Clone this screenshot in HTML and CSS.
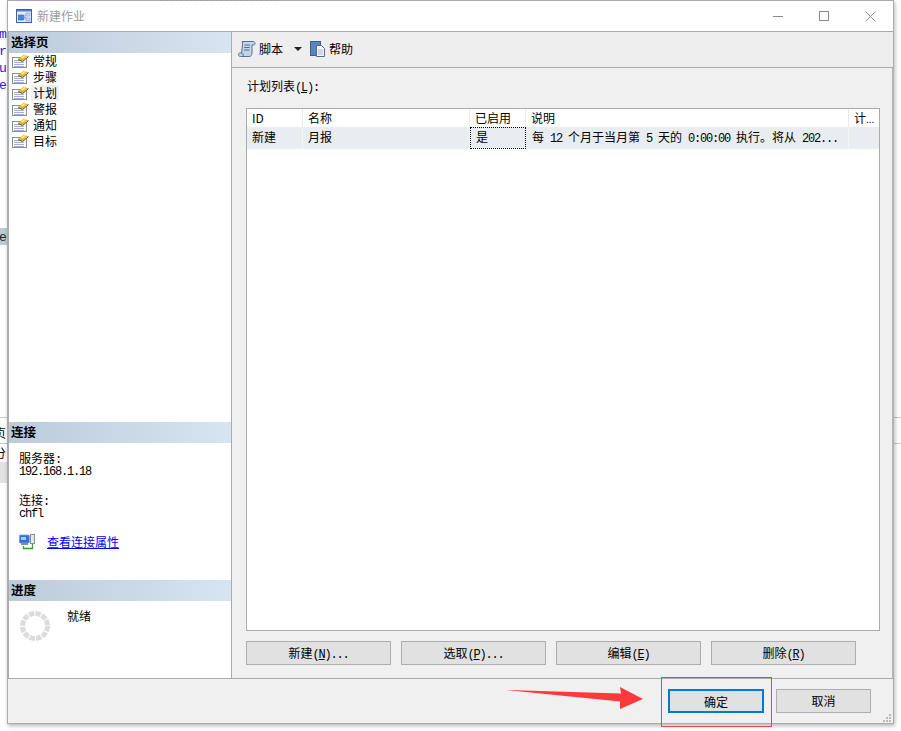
FILE: index.html
```html
<!DOCTYPE html>
<html lang="zh">
<head>
<meta charset="utf-8">
<title>新建作业</title>
<link rel="stylesheet" href="styles.css">
</head>
<body>
<svg class="defs" width="0" height="0" aria-hidden="true">
  <symbol id="page" viewBox="0 0 17 16">
    <rect x=".5" y="4.500" width="14" height="10" fill="#fcfcfc" stroke="#8c8c8c"/>
    <path d="M2 7.500h8M2 9.500h10M2 11.500h10M2 13.500h10" stroke="#9fb4d0"/>
    <path d="M6 6L12 1.500L16.500 3.500L10.500 8.500z" fill="#e8b52e"/>
    <path d="M9 4.500L12.500 2L14 2.700L10.500 5.500zM11.500 6.500L15 3.700L16 4.200L12.500 7z" fill="#fdeea0"/>
    <path d="M6 6.500L10.500 8.500L16.500 3.500" fill="none" stroke="#5e5436"/>
  </symbol>
</svg>

<div class="stage">
  <div class="backdrop">
    <span class="code c1">m</span>
    <span class="code c2">r</span>
    <span class="code c3">u</span>
    <span class="code c4">e</span>
    <div class="band"></div>
    <span class="code c5">e</span>
    <div class="rule r1"></div>
    <div class="rule r2"></div>
    <span class="frag f1">贞</span>
    <span class="frag f2">分</span>
    <div class="lower"></div>
    <div class="lower2"></div>
    <div class="rule r3"></div>
    <div class="rule r4"></div>
  </div>

  <section class="dialog">
    <header class="titlebar">
      <svg class="title-icon" width="16" height="14" viewBox="0 0 16 14">
        <rect x=".5" y=".5" width="15" height="13" fill="#e6edf9" stroke="#3f5fa8"/>
        <rect x="1" y="1" width="14" height="1.500" fill="#5a7dc8"/>
        <rect x="2.500" y="6" width="5" height="5" fill="#3d8be0" stroke="#2a5aa8" stroke-width=".6"/>
        <rect x="10" y="4" width="4" height="3" fill="#c9d9f2" stroke="#7f9ccc" stroke-width=".6"/>
        <rect x="10" y="9" width="4" height="3" fill="#c9d9f2" stroke="#7f9ccc" stroke-width=".6"/>
        <path d="M7.500 8.500h2M9 5.500v5" stroke="#7f9ccc" fill="none"/>
      </svg>
      <span class="title-text">新建作业</span>
      <div class="win-controls">
        <span class="win-btn"><svg width="10" height="10" viewBox="0 0 10 10"><path d="M0 5.500h10" stroke="#8a8a8a"/></svg></span>
        <span class="win-btn"><svg width="10" height="10" viewBox="0 0 10 10"><rect x=".5" y=".5" width="9" height="9" fill="none" stroke="#8a8a8a"/></svg></span>
        <span class="win-btn"><svg width="11" height="11" viewBox="0 0 11 11"><path d="M.5.500l10 10M10.500.500l-10 10" stroke="#8a8a8a" fill="none"/></svg></span>
      </div>
    </header>

    <div class="main">
      <aside class="side">
        <div class="side-pages">
          <h2 class="side-head">选择页</h2>
          <ul class="page-list">
            <li class="page-item"><svg class="page-icon"><use href="#page"/></svg><span class="page-label">常规</span></li>
            <li class="page-item"><svg class="page-icon"><use href="#page"/></svg><span class="page-label">步骤</span></li>
            <li class="page-item"><svg class="page-icon"><use href="#page"/></svg><span class="page-label is-current">计划</span></li>
            <li class="page-item"><svg class="page-icon"><use href="#page"/></svg><span class="page-label">警报</span></li>
            <li class="page-item"><svg class="page-icon"><use href="#page"/></svg><span class="page-label">通知</span></li>
            <li class="page-item"><svg class="page-icon"><use href="#page"/></svg><span class="page-label">目标</span></li>
          </ul>
        </div>

        <div class="side-conn">
          <h2 class="side-head">连接</h2>
          <div class="conn-body">
            <div class="conn-block">
              <div class="conn-line">服务器<span class="m">:</span></div>
              <div class="conn-line m">192.168.1.18</div>
            </div>
            <div class="conn-block">
              <div class="conn-line">连接<span class="m">:</span></div>
              <div class="conn-line m">chfl</div>
            </div>
            <div class="conn-link-row">
              <svg class="conn-icon" width="17" height="16" viewBox="0 0 17 16">
                <rect x=".4" y="1" width="10" height="8" rx="1" fill="#2f6fe0" stroke="#8aa0c8" stroke-width=".8"/>
                <rect x="2" y="3" width="5" height="3" fill="#9fc8f7"/>
                <rect x="2" y="9" width="7" height="2" fill="#7f8fa8"/>
                <rect x="11.500" y=".5" width="4" height="9" fill="#e4e6ea" stroke="#8a8f98"/>
                <path d="M13.500 10v4.500H4.500v-2.500" fill="none" stroke="#3f9a2a" stroke-width="1.300"/>
              </svg>
              <a class="conn-link" href="#">查看连接属性</a>
            </div>
          </div>
        </div>

        <div class="side-progress">
          <h2 class="side-head">进度</h2>
          <div class="progress-body">
            <svg class="spinner" width="30" height="30" viewBox="0 0 30 30">
              <circle cx="15" cy="15" r="12.500" fill="none" stroke="#dcdcdc" stroke-width="5" stroke-dasharray="5.400 1.145"/>
            </svg>
            <span class="progress-text">就绪</span>
          </div>
        </div>
      </aside>

      <div class="content">
        <div class="toolbar">
          <span class="tool">
            <svg width="18" height="18" viewBox="0 0 18 18">
              <path d="M4 1.500h11c1.500 0 2 1 2 2s-.5 1.500-1.500 1.500H14v8c0 2-1 3.500-3 3.500H2.500C1.200 16.500.5 15.500.5 14.500S1 13 2 13h1.500l1-8C4.700 3.500 4.500 2.500 4 1.500z" fill="#c4d3e6" stroke="#56728f"/>
              <path d="M6.500 5h5.500M6.200 7.500h5.500M6 10h5.500" stroke="#56728f"/>
              <path d="M3.500 13c1.500 0 2 1 1.500 3.500" fill="none" stroke="#56728f"/>
            </svg>
            <span>脚本</span>
          </span>
          <span class="caret"></span>
          <span class="tool">
            <svg width="16" height="16" viewBox="0 0 16 16">
              <rect x=".5" y=".5" width="10" height="14" fill="#5b84c4" stroke="#3c5c96"/>
              <path d="M6.500 4.500h5l3 3v8h-8z" fill="#f5f7fb" stroke="#55698c"/>
              <path d="M8 9h5M8 11h5M8 13h5" stroke="#a9b7cf"/>
            </svg>
            <span>帮助</span>
          </span>
        </div>

        <div class="pane">
          <div class="list-label">计划列表<span class="m">(<u>L</u>):</span></div>
          <div class="grid">
            <div class="grid-row grid-head">
              <div class="cell">ID</div>
              <div class="cell">名称</div>
              <div class="cell">已启用</div>
              <div class="cell">说明</div>
              <div class="cell">计<span class="dots">...</span></div>
            </div>
            <div class="grid-row grid-data">
              <div class="cell">新建</div>
              <div class="cell">月报</div>
              <div class="cell is-focus">是</div>
              <div class="cell desc">每<span class="m"> 12 </span>个月于当月第<span class="m"> 5 </span>天的<span class="m"> 0:00:00 </span>执行。将从<span class="m"> 202...</span></div>
              <div class="cell"></div>
            </div>
          </div>
          <div class="actions">
            <button class="btn btn-wide" type="button">新建<span class="m">(<u>N</u>)...</span></button>
            <button class="btn btn-wide" type="button">选取<span class="m">(<u>P</u>)...</span></button>
            <button class="btn btn-wide" type="button">编辑<span class="m">(<u>E</u>)</span></button>
            <button class="btn btn-wide" type="button">删除<span class="m">(<u>R</u>)</span></button>
          </div>
        </div>
      </div>
    </div>

    <footer class="footer">
      <button class="btn btn-ok" type="button">确定</button>
      <button class="btn btn-cancel" type="button">取消</button>
      <svg class="grip" width="8" height="8" viewBox="0 0 8 8">
        <path d="M6 0h2v2H6zM3 3h2v2H3zM6 3h2v2H6zM0 6h2v2H0zM3 6h2v2H3zM6 6h2v2H6z" fill="#b9b9b9"/>
      </svg>
    </footer>
  </section>

  <div class="top-dots td1"></div>
  <div class="top-dots td2"></div>
  <div class="callout-box"></div>
  <svg class="callout-arrow" width="140" height="24" viewBox="0 0 140 24">
    <path d="M0 3L116 6.500L115 0L138 12L115 22L115 14.500Z" fill="#fb3b3b"/>
  </svg>
</div>
</body>
</html>
```

FILE: styles.css
```css
* { box-sizing: border-box; }

html, body {
  margin: 0;
  padding: 0;
  background: #fff;
}

body {
  font-family: "Noto Sans CJK SC", "Liberation Sans", sans-serif;
  font-size: 12px;
  line-height: 16px;
  color: #000;
  overflow: hidden;
}

.defs { position: absolute; }

.stage {
  position: relative;
  width: 901px;
  height: 731px;
  overflow: hidden;
}

.m {
  font-family: "Liberation Mono", monospace;
  font-size: 12px;
  letter-spacing: -1.2px;
}

.dots {
  font-family: "Liberation Sans", sans-serif;
  font-size: 10px;
}

/* what shows behind the dialog */
.backdrop { position: absolute; inset: 0; }

.code {
  position: absolute;
  left: -1px;
  font-family: "Liberation Mono", monospace;
  font-size: 13px;
  line-height: 16px;
  color: #1a1ae6;
}
.c1 { top: 27px; }
.c2 { top: 44px; }
.c3 { top: 61px; }
.c4 { top: 78px; }
.c5 { top: 230px; color: #222; }

.band {
  position: absolute;
  left: 0;
  top: 228px;
  width: 8px;
  height: 17px;
  background: #bccad8;
}

.rule {
  position: absolute;
  height: 1px;
  background: #c8c8c8;
}
.r1 { left: 0; top: 417px; width: 8px; }
.r2 { left: 0; top: 443px; width: 8px; }
.r3 { left: 894px; top: 417px; width: 7px; }
.r4 { left: 894px; top: 443px; width: 7px; }

.frag {
  position: absolute;
  left: -6px;
  line-height: 16px;
}
.f1 { top: 425px; }
.f2 { top: 445px; }

.lower {
  position: absolute;
  left: 0;
  top: 444px;
  width: 8px;
  height: 18px;
  background: #f2f2f2;
  z-index: -1;
}
.lower2 {
  position: absolute;
  left: 0;
  top: 462px;
  width: 8px;
  height: 21px;
  background: #e2e2e2;
}

/* dialog window */
.dialog {
  position: absolute;
  left: 7px;
  top: 0;
  width: 887px;
  height: 724px;
  display: flex;
  flex-direction: column;
  background: #f0f0f0;
  border: 1px solid #ababab;
  box-shadow: 1px 2px 4px rgba(0, 0, 0, .28);
}

.titlebar {
  flex: 0 0 31px;
  display: flex;
  align-items: center;
  padding-left: 8px;
  background: #fff;
  border-bottom: 1px solid #ababab;
}

.title-icon { margin-right: 5px; }

.title-text {
  color: #9a9a9a;
  font-size: 12px;
}

.win-controls {
  margin-left: auto;
  display: flex;
}

.win-btn {
  width: 46px;
  height: 30px;
  display: flex;
  align-items: center;
  justify-content: center;
}

.main {
  flex: 1;
  min-height: 0;
  display: flex;
}

/* left column */
.side {
  flex: 0 0 224px;
  display: flex;
  flex-direction: column;
  background: #fff;
  border-left: 1px solid #ababab;
  border-right: 1px solid #ababab;
}

.side-pages {
  flex: 1;
  min-height: 0;
}

.side-conn { flex: 0 0 158px; }
.side-progress { flex: 0 0 98px; }

.side-head {
  margin: 0;
  height: 21px;
  padding-left: 2px;
  font-size: 12.500px;
  font-weight: 700;
  line-height: 19px;
  background: linear-gradient(90deg, #bccbdb 0%, #d7e4f1 100%);
}

.page-list {
  list-style: none;
  margin: 0;
  padding: 0;
}

.page-item {
  height: 16px;
  padding-left: 3px;
  display: flex;
  align-items: center;
}

.page-icon {
  width: 17px;
  height: 16px;
  margin-right: 4px;
}

.page-label {
  height: 16px;
  line-height: 16px;
}

.is-current {
  background: #f0f0f0;
  margin-left: -2px;
  padding: 0 2px;
}

.conn-body { padding: 9px 0 0 10px; }

.conn-block { margin-bottom: 16px; }

.conn-line {
  line-height: 12px;
  height: 12px;
}

.conn-line.m {
  margin-top: 2px;
  line-height: 13px;
}

.conn-link-row {
  display: flex;
  align-items: center;
  height: 16px;
  margin-top: -2px;
}

.conn-icon { margin-right: 11px; }

.conn-link { color: #0000ff; }

.progress-body {
  display: flex;
  align-items: flex-start;
  gap: 17px;
  padding: 9px 0 0 11px;
}

.spinner { margin-top: 1px; }

.progress-text { line-height: 12px; }

/* right column */
.content {
  flex: 1;
  min-width: 0;
  display: flex;
  flex-direction: column;
}

.toolbar {
  flex: 0 0 36px;
  display: flex;
  align-items: center;
  padding: 0 0 2px 6px;
  background: #eee;
  border-bottom: 1px solid #ababab;
}

.tool {
  display: flex;
  align-items: center;
  gap: 3px;
}

.caret {
  width: 0;
  height: 0;
  margin: 0 8px 0 11px;
  border-left: 4px solid transparent;
  border-right: 4px solid transparent;
  border-top: 4px solid #222;
}

.pane {
  flex: 1;
  min-height: 0;
  display: flex;
  flex-direction: column;
  padding: 10px 12px 13px 14px;
  border-right: 2px solid #b4b4b4;
  margin-right: -1px;
  background: #f0f0f0;
}

.list-label {
  height: 16px;
  line-height: 16px;
  margin: 0 0 14px 1px;
}

.grid {
  flex: 1;
  min-height: 0;
  background: #fff;
  border: 1px solid #ababab;
}

.grid-row {
  display: grid;
  grid-template-columns: 56px 167px 56px 323px 30px;
}

.grid-head { height: 18px; }

.grid-head .cell {
  line-height: 18px;
  border-right: 1px solid #e9e9e9;
}

.grid-head .cell:last-child { border-right: 0; }

.grid-data {
  height: 22px;
  background: #e9edf1;
}

.grid-data .cell {
  line-height: 20px;
  border-right: 1px solid #f2f4f6;
}

.grid-data .cell:last-child { border-right: 0; }

.cell {
  padding-left: 5px;
  white-space: nowrap;
  overflow: hidden;
}

.grid-data .is-focus {
  border: 1px dotted #000;
  padding-left: 5px;
  line-height: 18px;
}

.desc { padding-left: 6px; }

.actions {
  flex: 0 0 auto;
  display: flex;
  gap: 10px;
  margin-top: 10px;
}

.btn {
  height: 24px;
  padding: 0;
  font: inherit;
  line-height: 22px;
  color: #000;
  background: #e1e1e1;
  border: 1px solid #adadad;
  border-radius: 0;
}

.btn-wide { width: 145px; }

.footer {
  flex: 0 0 45px;
  position: relative;
  display: flex;
  justify-content: flex-end;
  gap: 12px;
  padding: 10px 22px 0 0;
  background: #f0f0f0;
  border-top: 1px solid #ababab;
}

.btn-ok {
  width: 96px;
  border: 2px solid #0078d7;
  padding-top: 1px;
  line-height: 19px;
}

.btn-cancel { width: 95px; }

.grip {
  position: absolute;
  right: 2px;
  bottom: 1px;
}

/* annotations drawn over the screenshot */
.top-dots {
  position: absolute;
  top: 0;
  height: 1px;
  opacity: .7;
}
.td1 {
  left: 20px;
  width: 55px;
  background: repeating-linear-gradient(90deg, #c98ac9 0 3px, transparent 3px 5px);
}
.td2 {
  left: 160px;
  width: 120px;
  background: repeating-linear-gradient(90deg, #9a9a9a 0 3px, transparent 3px 5px);
}

.callout-box {
  position: absolute;
  left: 661px;
  top: 677px;
  width: 111px;
  height: 50px;
  border: 1px solid #e8474a;
}

.callout-arrow {
  position: absolute;
  left: 505px;
  top: 687px;
}
```
